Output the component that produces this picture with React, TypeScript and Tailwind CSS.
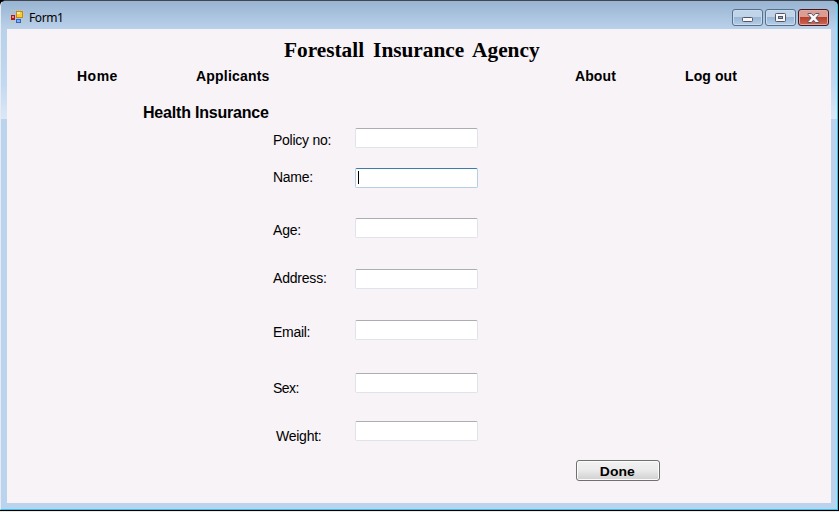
const rows = [
  { label: "Policy no:", row: "h-[40px]", text: "pt-[4px]", track: "tracking-[-0.25px]" },
  { label: "Name:", row: "h-[50px]", text: "pt-[1px]", track: "tracking-[-0.3px]", focused: true },
  { label: "Age:", row: "h-[51px]", text: "pt-[4px]", track: "tracking-[-0.2px]" },
  { label: "Address:", row: "h-[51px]", text: "pt-[1px]", track: "tracking-[-0.2px]" },
  { label: "Email:", row: "h-[53px]", text: "pt-[4px]", track: "tracking-[-0.3px]" },
  { label: "Sex:", row: "h-[48px]", text: "pt-[7px]", track: "tracking-[-0.5px]" },
  { label: "Weight:", row: "h-[39px]", text: "pt-[7px] pl-[3px]", track: "tracking-[-0.25px]" },
];

function FormIcon() {
  return (
    <svg width="14" height="14" viewBox="0 0 14 14" shapeRendering="crispEdges">
      <rect x="0.5" y="0.5" width="13" height="13" fill="none" stroke="#c5cba6" strokeDasharray="1 1" />
      <rect x="1" y="5" width="4" height="5" fill="#b51717" />
      <rect x="2" y="6" width="2" height="2" fill="#f08a78" />
      <rect x="6" y="1" width="7" height="7" fill="#c28a10" />
      <rect x="7" y="2" width="5" height="5" fill="#fbc93a" />
      <rect x="7" y="2" width="3" height="2" fill="#ffeaa0" />
      <rect x="6" y="9" width="5" height="4" fill="#2f62c4" />
      <rect x="7" y="10" width="3" height="2" fill="#7fb0f2" />
    </svg>
  );
}

function MinimizeGlyph() {
  return (
    <svg width="11" height="5" viewBox="0 0 11 5" className="mt-[4px]">
      <rect x="0.5" y="0.5" width="10" height="4" rx="0.8" fill="#f8f8f8" stroke="#535666" />
    </svg>
  );
}

function MaximizeGlyph() {
  return (
    <svg width="11" height="9" viewBox="0 0 11 9">
      <rect x="0.5" y="0.5" width="10" height="8" rx="0.8" fill="#f8f8f8" stroke="#535666" />
      <rect x="3.5" y="3.5" width="4" height="2" fill="#8faccc" stroke="#535666" />
    </svg>
  );
}

function CloseGlyph() {
  return (
    <svg width="13" height="10" viewBox="0 0 13 10">
      <path
        d="M1 .5h3.4L6.5 2.8 8.6.5H12v.9L8.9 5 12 8.6v.9H8.6L6.5 7.2 4.4 9.5H1v-.9L4.1 5 1 1.4Z"
        fill="#fafafa"
        stroke="#535666"
      />
    </svg>
  );
}

const caption =
  "flex h-[17px] w-[31px] items-center justify-center rounded-[3px] border border-[#586f8c] bg-linear-to-b from-[#bfd3e9] from-45% via-[#98b4d3] via-46% to-[#b5cee9] shadow-[inset_0_0_0_1px_#c8dcf0]";

export default function App() {
  return (
    <div className="h-[512px] w-[839px] overflow-hidden bg-[#e9e9ec] font-['Liberation_Sans',Arial,sans-serif] text-black">
      <div className="h-[511px] bg-black pr-px pb-px">
        <div className="h-[510px] w-[838px] rounded-t-[6px] border-t border-r border-b border-l border-t-[#41474d] border-r-[#36c5ea] border-b-[#36c5ea] border-l-[#e5ecf4] bg-[#bcd3ee]">
          <div className="h-[118px] rounded-t-[5px] bg-linear-to-b from-[#b9d1ea] from-25% via-[#c3d8f1] via-70% to-[#dce8f6]">
            <header className="flex h-[28px] items-start rounded-t-[5px] bg-linear-to-b from-[#98b4d2] to-[#bad1ea] pl-[9px]">
              <div className="mt-[9px]">
                <FormIcon />
              </div>
              <span className="mt-[9px] ml-[5px] font-['Noto_Sans','Open_Sans',sans-serif] text-[12px] leading-[16px] tracking-[-0.4px]">
                Form1
              </span>
              <div className="mt-[8px] mr-[8px] ml-auto flex gap-[2px]">
                <button aria-label="Minimize" className={caption}>
                  <MinimizeGlyph />
                </button>
                <button aria-label="Maximize" className={caption}>
                  <MaximizeGlyph />
                </button>
                <button
                  aria-label="Close"
                  className="flex h-[17px] w-[31px] items-center justify-center rounded-[3px] border border-[#481820] bg-linear-to-b from-[#dc9c91] from-45% via-[#b63a28] via-46% to-[#cb6955] shadow-[inset_0_0_0_1px_#dfaaa1]"
                >
                  <CloseGlyph />
                </button>
              </div>
            </header>
            <main className="ml-[6px] h-[474px] w-[824px] bg-[#f7f3f7]">
              <h1 className="ml-[277px] w-fit origin-left scale-x-[1.065] pt-[10px] font-['Liberation_Serif',serif] text-[20px] leading-[23px] font-bold whitespace-nowrap [word-spacing:3.5px]">
                Forestall Insurance Agency
              </h1>
              <nav className="flex h-[20px] pt-[5px] text-[14px] leading-[18px] font-bold whitespace-nowrap">
                <a className="ml-[70px] w-[119px] tracking-[0.5px]">Home</a>
                <a className="w-[379px] tracking-[0.2px]">Applicants</a>
                <a className="w-[110px] tracking-[0.1px]">About</a>
                <a className="tracking-[0.1px]">Log out</a>
              </nav>
              <h2 className="mt-[21px] ml-[136px] h-[25px] text-[16px] leading-[20px] font-bold tracking-[-0.2px] whitespace-nowrap">
                Health Insurance
              </h2>
              <form className="pl-[266px]">
                {rows.map((r) => (
                  <div key={r.label} className={`flex items-start ${r.row}`}>
                    <label className={`w-[82px] text-[14px] leading-[16px] whitespace-nowrap ${r.text} ${r.track}`}>
                      {r.label}
                    </label>
                    <div
                      className={
                        r.focused
                          ? "h-[20px] w-[123px] rounded-[2px] border border-[#b5cfe7] border-t-[#3d7bad] bg-white pt-[2px] pl-[2px]"
                          : "h-[20px] w-[123px] rounded-[2px] border border-[#e2e3ea] border-t-[#abadb3] bg-white"
                      }
                    >
                      {r.focused && <div className="h-[13px] w-px bg-black" />}
                    </div>
                  </div>
                ))}
              </form>
              <button className="ml-[569px] flex h-[21px] w-[84px] items-center justify-center rounded-[3px] border border-[#707070] bg-linear-to-b from-[#f2f2f2] from-0% via-[#ebebeb] via-48% to-[#cfcfcf] pt-[2px] pr-[1px] text-[13px] leading-[16px] font-bold shadow-[inset_0_0_0_1px_#fbfbfb]">
                <span className="scale-x-[1.07]">Done</span>
              </button>
            </main>
          </div>
        </div>
      </div>
    </div>
  );
}
